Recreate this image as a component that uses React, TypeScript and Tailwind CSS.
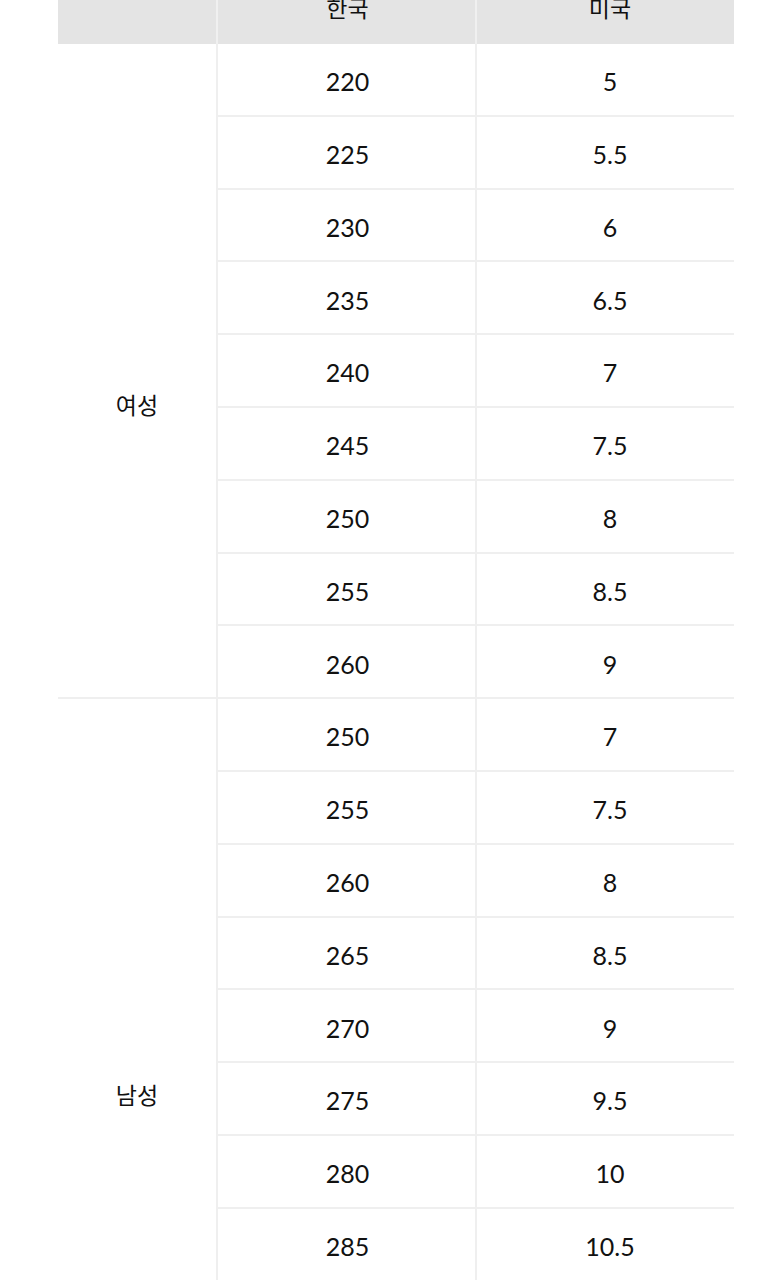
const women: [string, string][] = [
  ['220', '5'],
  ['225', '5.5'],
  ['230', '6'],
  ['235', '6.5'],
  ['240', '7'],
  ['245', '7.5'],
  ['250', '8'],
  ['255', '8.5'],
  ['260', '9'],
];

const men: [string, string][] = [
  ['250', '7'],
  ['255', '7.5'],
  ['260', '8'],
  ['265', '8.5'],
  ['270', '9'],
  ['275', '9.5'],
  ['280', '10'],
  ['285', '10.5'],
  ['290', '11'],
  ['295', '11.5'],
  ['300', '12'],
];

function SizeRow({ kr, us }: { kr: string; us: string }) {
  return (
    <div className="flex h-[72.8px] border-b-2 border-[#efefef]">
      <div className="flex w-[259px] items-center justify-center border-r-2 border-[#efefef] pl-[2px] pt-[5px]">
        {kr}
      </div>
      <div className="flex w-[257px] items-center justify-center pl-[9px] pt-[5px]">{us}</div>
    </div>
  );
}

function Group({ label, rows, offset }: { label: string; rows: [string, string][]; offset: string }) {
  return (
    <div className="flex">
      <div
        className={`flex w-[160px] items-center justify-center border-b-2 border-r-2 border-[#efefef] text-[23px] ${offset}`}
        style={{ fontFamily: '"Noto Sans CJK KR", sans-serif' }}
      >
        {label}
      </div>
      <div className="flex flex-col">
        {rows.map(([kr, us]) => (
          <SizeRow key={kr + us} kr={kr} us={us} />
        ))}
      </div>
    </div>
  );
}

export default function App() {
  return (
    <div className="h-[1280px] overflow-hidden bg-white">
      <div
        className="ml-[58px] mt-[-29px] w-[676px] text-[25px] text-[#111]"
        style={{ fontFamily: 'Lato, "Noto Sans CJK KR", sans-serif' }}
      >
        <div className="flex h-[73px] bg-[#e4e4e4] text-[23px]" style={{ fontFamily: '"Noto Sans CJK KR", sans-serif' }}>
          <div className="w-[160px] border-r-2 border-[#f0f0f0]" />
          <div className="flex w-[259px] items-center justify-center border-r-2 border-[#f0f0f0] pl-[2px]">한국</div>
          <div className="flex w-[257px] items-center justify-center pl-[9px]">미국</div>
        </div>
        <Group label="여성" rows={women} offset="pt-[68px]" />
        <Group label="남성" rows={men} offset="pb-[8px]" />
      </div>
    </div>
  );
}
